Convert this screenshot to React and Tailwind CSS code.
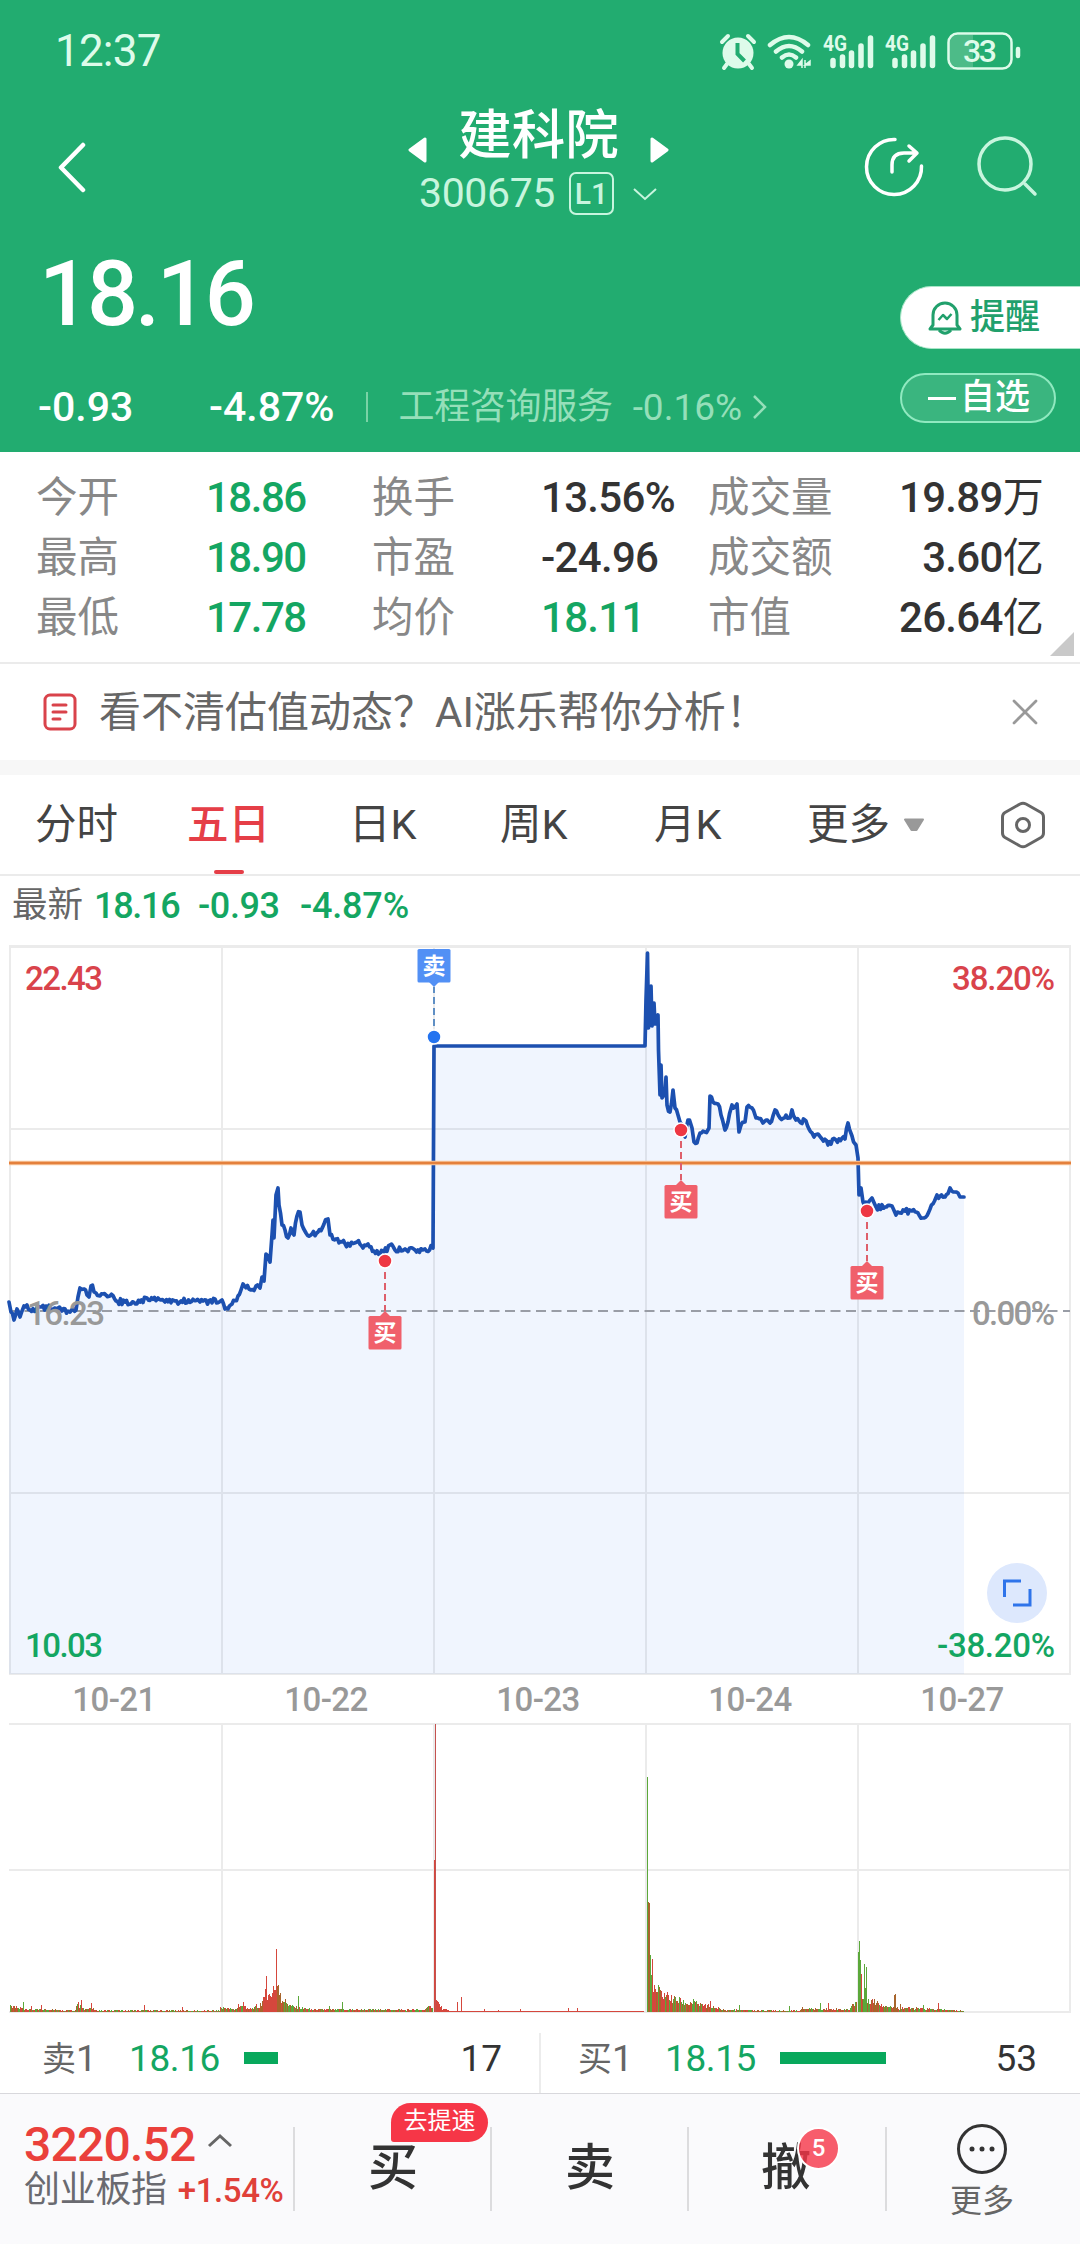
import { X } from "lucide-react";

const stats = [
    ["今开", "18.86", "换手", "13.56%", "成交量", "19.89万"],
    ["最高", "18.90", "市盈", "-24.96", "成交额", "3.60亿"],
    ["最低", "17.78", "均价", "18.11", "市值", "26.64亿"],
];

const GREEN_VALUES = ["18.86", "18.90", "17.78", "18.11"];

// price line key points, chart space is 1080 x 740
const PRICE = [
    [9, 366], [11, 376], [14, 384], [17, 373], [20, 381], [24, 370], [30, 374], [40, 371], [55, 372], [62, 375],
    [70, 376], [76, 374], [78, 361], [80, 352], [84, 353], [87, 359], [89, 361], [91, 350], [96, 357], [100, 360],
    [110, 360], [116, 365], [125, 366], [140, 366], [147, 362], [158, 362], [165, 366], [175, 365], [200, 366], [222, 364],
    [225, 373], [232, 368], [238, 360], [243, 348], [251, 354], [256, 350], [260, 352], [262, 341], [264, 345], [266, 318],
    [270, 326], [272, 299], [273, 284], [274, 302], [276, 259], [278, 252], [279, 269], [282, 289], [285, 294], [288, 302],
    [291, 292], [294, 299], [297, 280], [300, 276], [302, 289], [306, 297], [312, 298], [318, 296], [324, 288], [328, 283],
    [330, 299], [336, 303], [342, 306], [350, 310], [357, 306], [363, 312], [368, 308], [374, 315], [384, 316], [390, 309],
    [395, 314], [405, 313], [415, 314], [425, 313], [433, 312], [434, 110], [645, 110], [646, 64], [647.5, 17], [648.5, 92],
    [651, 50], [652, 90], [654, 67], [655, 88], [658, 79], [658.5, 114], [660, 159], [661, 129], [662, 162], [665, 158],
    [666, 141], [667, 169], [670, 176], [673, 154], [675, 172], [678, 179], [680, 186], [685, 201], [688, 184], [692, 192],
    [694, 206], [697, 207], [700, 197], [705, 196], [709, 192], [710, 160], [713, 166], [718, 168], [721, 179], [725, 194],
    [728, 186], [732, 169], [735, 171], [737, 168], [739, 196], [741, 189], [745, 186], [747, 171], [752, 172], [756, 182],
    [763, 187], [770, 187], [775, 174], [780, 182], [790, 182], [792, 174], [796, 184], [806, 185], [809, 193], [814, 201],
    [818, 198], [822, 203], [828, 209], [836, 204], [845, 203], [848, 187], [852, 200], [856, 209], [858, 222], [859, 259],
    [861, 252], [863, 266], [868, 267], [872, 262], [876, 271], [885, 271], [892, 270], [896, 279], [900, 277], [905, 275],
    [912, 275], [918, 277], [924, 282], [930, 273], [937, 259], [945, 261], [950, 252], [955, 256], [960, 261], [964, 261],
];

// small deterministic noise so the lines look like tick data
const noise = (n) => {
    const v = Math.sin(n * 12.9898) * 43758.5453;
    return v - Math.floor(v);
};

const buildLine = () => {
    const pts = [];
    PRICE.forEach(([x, y], i) => {
        pts.push([x, y]);
        const next = PRICE[i + 1];
        if (!next || next[0] - x > 100) return;
        for (let px = x + 1.5; px < next[0] - 1; px += 1.5) {
            const t = (px - x) / (next[0] - x);
            pts.push([px, y + (next[1] - y) * t + (noise(px) - 0.5) * 6]);
        }
    });
    return pts.map(([x, y]) => `${x.toFixed(1)},${y.toFixed(1)}`).join(" ");
};

const line = buildLine();

// [from, to, height at from, height at to]
const VOLUME = [
    [10, 30, 6, 3], [30, 76, 3, 2], [76, 84, 9, 5], [84, 94, 4, 4], [94, 220, 2, 1.5], [220, 236, 5, 3],
    [236, 246, 5, 8], [246, 260, 3, 6], [260, 274, 10, 24], [274, 281, 26, 24], [281, 292, 15, 6], [292, 310, 6, 3],
    [310, 424, 3, 2.5], [424, 433, 4, 7], [436, 442, 13, 4], [442, 450, 3, 2], [450, 644, 1, 1], [650, 670, 26, 18],
    [670, 690, 16, 9], [690, 720, 11, 4], [720, 800, 2.5, 1.5], [800, 850, 4, 3], [850, 857, 5, 14], [861, 880, 17, 10],
    [880, 900, 9, 4], [900, 964, 5, 1.5],
];

const SPIKES = [
    [23, 10, "g"], [31, 6, "r"], [41, 7, "r"], [78, 10, "r"], [81, 12, "r"], [91, 9, "r"], [144, 7, "r"], [182, 5, "r"],
    [238, 8, "r"], [243, 10, "r"], [256, 8, "r"], [265, 23, "r"], [266, 36, "r"], [276, 63, "r"], [273, 26, "r"], [278, 27, "o"],
    [298, 16, "g"], [342, 10, "g"], [329, 6, "g"], [457, 10, "r"], [461, 15, "r"], [484, 3, "r"], [498, 2, "r"], [520, 3, "r"],
    [568, 4, "r"], [577, 4, "r"], [646.5, 78, "o"], [648, 110, "o"], [649, 109, "o"], [650, 57, "g"], [652, 53, "r"], [651, 37, "g"],
    [658, 27, "g"], [679, 15, "g"], [693, 13, "g"], [710, 11, "r"], [739, 7, "g"], [789, 6, "g"], [820, 9, "g"], [828, 9, "r"],
    [858, 60, "g"], [859, 71, "g"], [860, 52, "g"], [861, 38, "r"], [864, 48, "g"], [865, 24, "g"], [866, 45, "g"], [895, 18, "o"],
    [894, 17, "o"], [900, 8, "o"], [923, 7, "g"], [938, 9, "r"],
];

const COLORS = { r: "#d5473d", g: "#5ba83a", o: "#a8652c" };

const bars = VOLUME.flatMap(([from, to, a, b]) => {
    const out = [];
    for (let x = from; x < to; x += 1) {
        const base = a + ((b - a) * (x - from)) / (to - from);
        const n = noise(x * 3.7);
        let c = n > 0.66 ? "g" : n > 0.33 ? "o" : "r";
        if (x > 433 && x < 644) c = "r";
        if (x > 262 && x < 276) c = "r";
        out.push([x, Math.max(1, base * (0.55 + noise(x) * 0.6)), c]);
    }
    return out;
}).concat(SPIKES);

const GRID_X = [10, 222, 434, 646, 858, 1070];

function StatusIcons() {
    return (
        <svg width="304" height="40" viewBox="0 0 304 40" fill="none" stroke="#defbea">
            {/* alarm */}
            <circle cx="19" cy="22" r="15.5" fill="#defbea" stroke="none" />
            <path d="M3 11 9 5M35 11 29 5M8 33 5 37M30 33 33 37" strokeWidth="4" strokeLinecap="round" />
            <path d="M18.500 12v11l7 7" stroke="#22ac70" strokeWidth="4" />
            {/* wifi */}
            <g strokeWidth="4.500" strokeLinecap="round">
                <path d="M51 14q19-16 38 0M57 20.500q13-11 26 0M63 26.500q7-6 14 0" />
            </g>
            <circle cx="70" cy="33" r="4.500" fill="#defbea" stroke="none" />
            <path d="M79 34h4v-5zM83 29v8M86 29v8M86 34h5v-4z" fill="#defbea" strokeWidth="1.500" />
            {[0, 62].map((dx) => (
                <g key={dx} transform={`translate(${dx} 0)`}>
                    <text x="104" y="20" fontSize="22" fontWeight="700" fill="#defbea" stroke="none" textLength="24" lengthAdjust="spacingAndGlyphs">4G</text>
                    <path d="M114 29.500v5M123.500 26v8.500M132.500 22v12.500M142 15v19.500M151.500 7v27.500" strokeWidth="5.500" strokeLinecap="round" />
                </g>
            ))}
            {/* battery */}
            <path d="M238 4h16v32h-16q-8-2-8-9V12q0-8 8-8z" fill="#4dbb88" stroke="none" />
            <rect x="229.500" y="2.500" width="63" height="35" rx="9" strokeWidth="2.500" />
            <path d="M299 18v7" strokeWidth="4.500" strokeLinecap="round" />
            <text x="261" y="31" fontSize="32" fontWeight="500" fill="#defbea" stroke="none" textAnchor="middle" textLength="34">33</text>
        </svg>
    );
}

function Header() {
    return (
        <header className="h-[452px] bg-[#22ac70] text-white">
            <div className="flex h-[102px] items-center justify-between pl-[55px] pr-[57px]">
                <span className="text-[44px] leading-none tracking-[-0.8px] text-[#defbea]">12:37</span>
                <StatusIcons />
            </div>

            <div className="flex h-[130px] items-center justify-between pl-[56px] pr-[42px]">
                <svg width="32" height="52" viewBox="0 0 32 52" fill="none">
                    <path d="M27 4 5 26.500 27 49" stroke="#fff" strokeWidth="4.500" strokeLinecap="round" strokeLinejoin="round" />
                </svg>
                <div className="-mt-[13px] ml-[126px] flex flex-col items-center">
                    <div className="flex h-[66px] items-center gap-[31px]">
                        <svg width="19" height="28" viewBox="0 0 19 28" className="mt-[29px]">
                            <path d="M17 3v22L2 14z" fill="#fff" stroke="#fff" strokeWidth="3" strokeLinejoin="round" />
                        </svg>
                        <h1 className="text-[53.500px] font-medium leading-[66px]">建科院</h1>
                        <svg width="19" height="28" viewBox="0 0 19 28" className="mt-[29px]">
                            <path d="M2 3v22l15-11z" fill="#fff" stroke="#fff" strokeWidth="3" strokeLinejoin="round" />
                        </svg>
                    </div>
                    <div className="flex h-[50px] items-center text-[#c8f5de]">
                        <span className="text-[41px] leading-none tracking-[-0.4px]">300675</span>
                        <span className="ml-[14px] flex h-[43px] w-[45px] items-center justify-center rounded-[7px] border-2 border-current text-[30px] font-medium leading-none">L1</span>
                        <svg width="26" height="14" viewBox="0 0 26 14" fill="none" className="ml-[18px]">
                            <path d="M2 2l11 10L24 2" stroke="currentColor" strokeWidth="2" />
                        </svg>
                    </div>
                </div>
                <div className="flex items-center gap-[51px]">
                    <svg width="62" height="62" viewBox="0 0 62 62" fill="none" stroke="#fff" strokeWidth="3.500" strokeLinecap="round" strokeLinejoin="round">
                        <path d="M32 3.500A27.500 27.500 0 1 0 58.500 30" />
                        <path d="M29 36v-7q0-12 12-12h12M46 10l8 7-8 8" />
                    </svg>
                    <svg width="62" height="62" viewBox="0 0 62 62" fill="none" stroke="#c8f5de" strokeWidth="3.500" strokeLinecap="round">
                        <circle cx="29" cy="28" r="26" />
                        <path d="M49 48l10 10" />
                    </svg>
                </div>
            </div>

            <div className="flex h-[220px]">
                <div className="flex-1 pl-[38px]">
                    <div className="pl-px pt-[8px] text-[90px] font-medium leading-[110px] tracking-[-3.200px]">18.16</div>
                    <div className="mt-[31px] flex h-[52px] items-center text-[41px] font-medium leading-none">
                        <span className="w-[171px]">-0.93</span>
                        <span>-4.87%</span>
                        <span className="ml-[32px] h-[30px] w-[2px] bg-[#7ad3a6]" />
                        <span className="ml-[30px] flex items-center text-[36px] font-normal tracking-[-0.300px] text-[#95dfb9]">
                            工程咨询服务
                            <span className="ml-[20px] text-[37px] tracking-normal">-0.16%</span>
                            <svg width="15" height="26" viewBox="0 0 15 26" fill="none" className="ml-[10px]">
                                <path d="M2 2l11 11L2 24" stroke="currentColor" strokeWidth="2.500" />
                            </svg>
                        </span>
                    </div>
                </div>
                <div className="flex w-[180px] flex-col">
                    <button className="mt-[54px] flex h-[63px] items-center rounded-l-full border-y border-l border-[#a9e6c8] bg-white pl-[27px] text-[35px] font-medium leading-none text-[#21a06c]">
                        <svg width="34" height="36" viewBox="0 0 34 36" fill="none" stroke="currentColor" strokeWidth="3" strokeLinejoin="round">
                            <path d="M5 25V15a12 12 0 0 1 24 0v10l3 4H2z" />
                            <path d="M11 30q6 6.500 12 0" />
                            <path d="M10.500 20l4.500-5 4 4 4.500-5" strokeWidth="2.500" />
                        </svg>
                        <span className="ml-[8px]">提醒</span>
                    </button>
                    <button className="mt-[24px] flex h-[50px] w-[156px] items-center rounded-full border-2 border-[#90e9c0] bg-[#3ab57f] pl-[26px] text-[35px] font-medium leading-none">
                        <span className="mr-[4px] h-[3px] w-[28px] bg-white" />
                        <span className="-mt-[2px]">自选</span>
                    </button>
                </div>
            </div>
        </header>
    );
}

function Stats() {
    return (
        <section className="relative h-[212px] border-b-2 border-[#ebebeb] pl-[36px] pr-[37px] pt-[16px]">
            {stats.map((row) => (
                <div key={row[0]} className="grid h-[60px] grid-cols-[170px_166px_169px_167px_126px_1fr] items-center whitespace-nowrap text-[42px] leading-[60px]">
                    {row.map((cell, i) => {
                        if (i % 2 === 0) {
                            return <span key={cell} className="text-[41.500px] text-[#888]">{cell}</span>;
                        }
                        const color = GREEN_VALUES.includes(cell) ? "text-[#14a662]" : "text-[#333]";
                        const tracking = i === 1 ? "tracking-[-1.500px]" : "tracking-[-0.700px]";
                        return (
                            <span key={cell} className={`font-medium ${tracking} ${color} ${i === 5 ? "text-right" : ""}`}>
                                {i === 5 ? cell.slice(0, -1) : cell}
                                {i === 5 && <span className="text-[41px] font-normal">{cell.slice(-1)}</span>}
                            </span>
                        );
                    })}
                </div>
            ))}
            <svg width="24" height="24" viewBox="0 0 24 24" className="absolute bottom-[6px] right-[6px]">
                <path d="M24 0v24H0z" fill="#c9c9c9" />
            </svg>
        </section>
    );
}

function Tip() {
    return (
        <section className="flex h-[96px] items-center pl-[43px] pr-[33px]">
            <svg width="34" height="38" viewBox="0 0 34 38" fill="none" stroke="#d9434b" strokeWidth="3" strokeLinecap="round">
                <rect x="2" y="2" width="30" height="34" rx="5" />
                <path d="M10 12h13M10 19h13M10 26h7" />
            </svg>
            <p className="ml-[22px] mt-[2px] flex-1 text-[42px] leading-none text-[#666]">看不清估值动态？AI涨乐帮你分析！</p>
            <X size={44} strokeWidth={1.5} className="text-[#999]" />
        </section>
    );
}

function Tabs() {
    return (
        <nav className="grid h-[101px] grid-cols-[152px_162px_151px_154px_153px_194px_1fr] items-center border-b-2 border-[#ebebeb] pl-[35px] text-[41.500px] leading-[99px] text-[#444]">
            <span>分时</span>
            <span className="relative font-medium text-[#e53e47]">
                五日
                <i className="absolute bottom-0 left-[27px] h-[4px] w-[30px] rounded-full bg-[#e53e47]" />
            </span>
            <span>日K</span>
            <span>周K</span>
            <span>月K</span>
            <span className="flex items-center gap-[13px]">
                更多
                <svg width="22" height="14" viewBox="0 0 22 14">
                    <path d="M2 1.500h18l-6.500 10.500h-5z" fill="#999" stroke="#999" strokeWidth="2" strokeLinejoin="round" />
                </svg>
            </span>
            <svg width="44" height="48" viewBox="0 0 44 48" fill="none" stroke="#666" strokeWidth="3" strokeLinejoin="round">
                <path d="M19 3q3-1.500 6 0l15 8.500q2.500 1.500 2.500 4.500v16q0 3-2.500 4.500L25 45q-3 1.500-6 0L4 36.500Q1.500 35 1.500 32V16q0-3 2.500-4.500z" />
                <circle cx="22" cy="24" r="6.500" />
            </svg>
        </nav>
    );
}

function Marker({ x, y, sell }) {
    const s = sell ? -1 : 1;
    const color = sell ? "#2373f0" : "#ee3743";
    const label = sell ? "#5290f5" : "#f0606b";
    const boxY = sell ? y - 88 : y + 55;
    return (
        <g>
            <line x1={x} x2={x} y1={y + s * 11} y2={y + s * 50} stroke={sell ? "#5f8fc4" : "#de5f6b"} strokeWidth="2" strokeDasharray="7 4" />
            <circle cx={x} cy={y} r="7" fill={color} stroke="#fff" strokeWidth="1.500" />
            <path d={`M${x - 6} ${y + s * 56}L${x} ${y + s * 50}L${x + 6} ${y + s * 56}z`} fill={label} />
            <rect x={x - 16.5} y={boxY} width="33" height="33.500" rx="1.500" fill={label} />
            <text x={x} y={boxY + 25} fontSize="23" fontWeight="700" fill="#fff" textAnchor="middle">{sell ? "卖" : "买"}</text>
        </g>
    );
}

function PriceChart() {
    return (
        <svg width="1080" height="740" viewBox="0 0 1080 740" className="block" fontSize="33" fontWeight="500">
            <g stroke="#ebebeb" strokeWidth="2">
                <path d="M9 10.500H1071" strokeWidth="3" />
                <path d="M9 193H1071M9 557H1071M9 738H1071" />
                {GRID_X.map((x) => (
                    <line key={x} x1={x} x2={x} y1="10" y2="739" />
                ))}
            </g>
            <polygon points={`9,738 ${line} 964,738`} fill="#2870f0" fillOpacity="0.07" />
            <line x1="9" x2="1070" y1="375" y2="375" stroke="#999da6" strokeWidth="2" strokeDasharray="10 5.500" />
            <polyline points={line} fill="none" stroke="#1c50b0" strokeWidth="3.700" strokeLinejoin="round" strokeLinecap="round" />
            <line x1="9" x2="1071" y1="227" y2="227" stroke="#f9c9a0" strokeWidth="4.500" />
            <line x1="9" x2="1071" y1="227" y2="227" stroke="#e4803c" strokeWidth="2.500" />

            <Marker x={434} y={101} sell />
            <Marker x={385} y={325} />
            <Marker x={681} y={194} />
            <Marker x={867} y={275} />

            <text x="25" y="54" fill="#d9434b" textLength="78">22.43</text>
            <text x="1055" y="54" fill="#d9434b" textAnchor="end" textLength="103">38.20%</text>
            <text x="27" y="389" fill="#999" textLength="78">16.23</text>
            <text x="1055" y="389" fill="#999" textAnchor="end" textLength="83">0.00%</text>
            <text x="25" y="721" fill="#14a662" textLength="78">10.03</text>
            <text x="1055" y="721" fill="#14a662" textAnchor="end" textLength="118">-38.20%</text>

            <circle cx="1017" cy="657" r="30" fill="#dde8fd" />
            <path d="M1004.500 661v-16H1021M1030 653v16H1013" fill="none" stroke="#2f74ea" strokeWidth="3" />
        </svg>
    );
}

function VolumeChart() {
    return (
        <svg width="1080" height="291" viewBox="0 0 1080 291" className="block" shapeRendering="crispEdges">
            <g stroke="#ebebeb" strokeWidth="2">
                <path d="M9 2H1071M9 148H1071M9 290H1071" />
                {GRID_X.slice(1).map((x) => (
                    <line key={x} x1={x} x2={x} y1="2" y2="290" />
                ))}
            </g>
            {bars.map(([x, h, c], i) => (
                <rect key={i} x={x} y={290 - h} width="1" height={h} fill={COLORS[c]} />
            ))}
            <rect x="434" y="138" width="2" height="152" fill="#d5473d" />
            <rect x="435" y="2" width="1" height="288" fill="#c4524f" />
            <rect x="647" y="55" width="1" height="235" fill="#5ba83a" />
        </svg>
    );
}

function OrderRow({ name, price, count, children }) {
    return (
        <div className="flex h-[50px] flex-1 items-center text-[37px] leading-none">
            <span className="w-[87px] text-[34px] text-[#666]">
                {name}
                <span className="text-[37px]">1</span>
            </span>
            <span className="w-[115px] tracking-[-0.400px] text-[#14a662]">{price}</span>
            {children}
            <span className="ml-auto text-[#333]">{count}</span>
        </div>
    );
}

function BottomBar() {
    return (
        <footer className="flex h-[151px] border-t border-[#d8d8dc] bg-[#fafafc] text-[#333]">
            <div className="w-[293px] pl-[24px] pt-[24px]">
                <div className="flex h-[53px] items-center text-[48px] font-medium leading-none tracking-[-0.800px] text-[#ea403b]">
                    3220.52
                    <svg width="28" height="16" viewBox="0 0 28 16" fill="none" className="-mt-[8px] ml-[11px]">
                        <path d="M3 13l11-10 11 10" stroke="#666" strokeWidth="3" />
                    </svg>
                </div>
                <div className="-mt-[2px] flex h-[42px] items-center whitespace-nowrap text-[36px] leading-none tracking-[-0.300px] text-[#6a6a70]">
                    创业板指
                    <span className="ml-[11px] text-[33px] font-medium tracking-[-0.400px] text-[#e04039]">+1.54%</span>
                </div>
            </div>
            <div className="mt-[33px] flex h-[84px] flex-1 text-[50px] font-medium leading-[82px]">
                <div className="relative w-[197px] border-l-2 border-[#dcdcde] pl-[73px]">
                    买
                    <span className="absolute -top-[24px] left-[96px] h-[39px] w-[97px] rounded-[20px] rounded-bl-[3px] bg-[#f63647] text-center text-[24px] font-normal leading-[36px] text-white">去提速</span>
                </div>
                <div className="w-[197px] border-l-2 border-[#dcdcde] pl-[73px]">卖</div>
                <div className="relative w-[198px] border-l-2 border-[#dcdcde] pl-[72px]">
                    撤
                    <span className="absolute left-[108px] top-0 size-[43px] rounded-full border-2 border-white bg-[#f63647]/80 text-center text-[24px] leading-[38px] text-white">5</span>
                </div>
                <div className="flex flex-1 flex-col items-center border-l-2 border-[#dcdcde] pr-[3px] text-[32px] font-normal leading-[38px] text-[#666]">
                    <svg width="52" height="52" viewBox="0 0 52 52" fill="none" stroke="#333" strokeWidth="3" className="-mt-[4px] shrink-0">
                        <circle cx="26" cy="26" r="23.500" />
                        <g fill="#333" stroke="none">
                            <circle cx="16" cy="26" r="2.500" />
                            <circle cx="26" cy="26" r="2.500" />
                            <circle cx="36" cy="26" r="2.500" />
                        </g>
                    </svg>
                    <span className="mt-[7px]">更多</span>
                </div>
            </div>
        </footer>
    );
}

export default function App() {
    return (
        <div className="h-[2244px] w-[1080px] overflow-hidden bg-white font-[family-name:Roboto,'Noto_Sans_CJK_SC',sans-serif]">
            <Header />
            <Stats />
            <Tip />
            <div className="h-[15px] bg-[#f7f7f7]" />
            <Tabs />

            <div className="flex h-[60px] items-center pl-[12px] text-[36px] font-medium leading-none text-[#14a662]">
                <span className="mr-[11px] text-[35.500px] font-normal text-[#666]">最新</span>
                <span className="w-[104px] tracking-[-1.300px]">18.16</span>
                <span className="w-[102px] tracking-[-0.400px]">-0.93</span>
                <span className="tracking-[-0.200px]">-4.87%</span>
            </div>
            <PriceChart />
            <div className="grid h-[46px] grid-cols-5 pl-[8px] pr-[12px] text-center text-[33px] font-medium leading-[48px] tracking-[-0.500px] text-[#999]">
                {["10-21", "10-22", "10-23", "10-24", "10-27"].map((d) => (
                    <span key={d}>{d}</span>
                ))}
            </div>
            <VolumeChart />

            <div className="flex h-[80px] items-end">
                <div className="flex h-[60px] w-[541px] border-r-2 border-[#ececec] pl-[42px] pr-[37px]">
                    <OrderRow name="卖" price="18.16" count="17">
                        <i className="h-[12px] w-[34px] bg-[#08a85c]" />
                    </OrderRow>
                </div>
                <div className="flex h-[60px] flex-1 pl-[37px] pr-[43px]">
                    <OrderRow name="买" price="18.15" count="53">
                        <i className="h-[12px] w-[106px] bg-[#08a85c]" />
                    </OrderRow>
                </div>
            </div>
            <BottomBar />
        </div>
    );
}
